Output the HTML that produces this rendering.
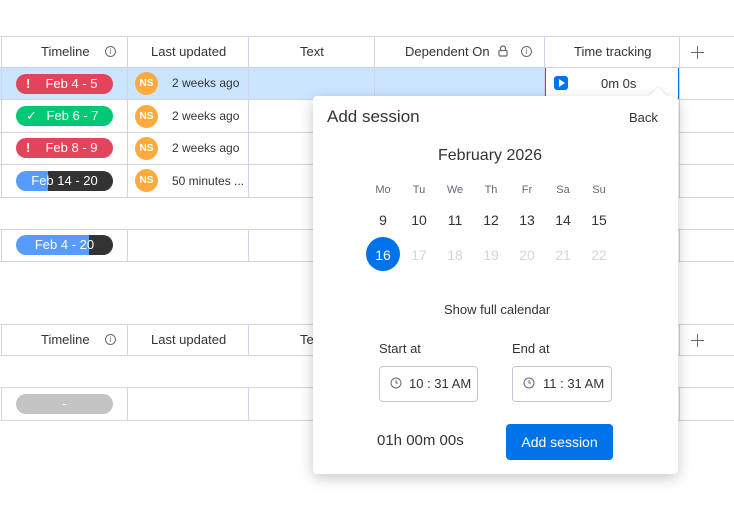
<!DOCTYPE html>
<html><head><style>
*{box-sizing:border-box;margin:0;padding:0}
body{width:734px;height:508px;background:#fff;font-family:"Liberation Sans",sans-serif;color:#323338;position:relative;overflow:hidden;font-size:13px}
.h{position:absolute;background:#d0d4e8;height:1px}
.v{position:absolute;background:#d0d4e8;width:1px}
.t{position:absolute;white-space:nowrap}
.pill{position:absolute;left:16px;width:97px;height:20px;border-radius:10px;color:#fff;font-size:13px;text-align:center;line-height:20px;overflow:hidden}
.av{position:absolute;left:135px;width:23px;height:23px;border-radius:50%;background:#fdab3d;color:#fff;font-size:10px;font-weight:bold;text-align:center;line-height:23px}
.info{position:absolute;width:11px;height:11px;border:1px solid #676879;border-radius:50%;font-size:8px;line-height:9px;text-align:center;color:#676879}
.day{position:absolute;width:36px;text-align:center;font-size:14px}
.plus{position:absolute;width:13px;height:13px}
.plus:before,.plus:after{content:"";position:absolute;background:#676879}
.plus:before{left:6px;top:0;width:1px;height:13px}
.plus:after{top:6px;left:0;height:1px;width:13px}
</style></head><body>
<div style="position:absolute;left:0;top:67px;width:679px;height:32px;background:#cce5ff"></div>
<div style="position:absolute;left:545px;top:67px;width:134px;height:32px;border:1px solid #0073ea;background:#fff"></div>
<div class="h" style="left:0;top:36px;width:734px"></div>
<div class="h" style="left:0;top:67px;width:734px"></div>
<div class="h" style="left:0;top:99px;width:734px"></div>
<div class="h" style="left:0;top:132px;width:734px"></div>
<div class="h" style="left:0;top:164px;width:734px"></div>
<div class="h" style="left:0;top:197px;width:734px"></div>
<div class="h" style="left:0;top:229px;width:734px"></div>
<div class="h" style="left:0;top:261px;width:734px"></div>
<div class="v" style="left:1px;top:36px;height:161px"></div>
<div class="v" style="left:127px;top:36px;height:161px"></div>
<div class="v" style="left:248px;top:36px;height:161px"></div>
<div class="v" style="left:374px;top:36px;height:161px"></div>
<div class="v" style="left:544px;top:36px;height:161px"></div>
<div class="v" style="left:679px;top:36px;height:161px"></div>
<div class="v" style="left:1px;top:229px;height:32px"></div>
<div class="v" style="left:127px;top:229px;height:32px"></div>
<div class="v" style="left:248px;top:229px;height:32px"></div>
<div class="v" style="left:679px;top:229px;height:32px"></div>
<div class="t" style="left:41px;top:44px">Timeline</div><div class="info" style="left:105px;top:46px">i</div>
<div class="t" style="left:151px;top:44px">Last updated</div>
<div class="t" style="left:300px;top:44px">Text</div>
<div class="t" style="left:405px;top:44px">Dependent On</div>
<svg style="position:absolute;left:498px;top:45px" width="10" height="12" viewBox="0 0 10 12"><path d="M2.5 5.5V3.5a2.5 2.5 0 0 1 5 0v2" fill="none" stroke="#676879" stroke-width="1.2"/><rect x="1" y="5.5" width="8" height="5.5" rx="1" fill="none" stroke="#676879" stroke-width="1.2"/></svg>
<div class="info" style="left:521px;top:46px">i</div>
<div class="t" style="left:574px;top:44px">Time tracking</div>
<div class="plus" style="left:691px;top:46px"></div>
<div class="pill" style="top:74px;background:#e2445c"><b style="position:absolute;left:10px">!</b><span style="margin-left:14px">Feb 4 - 5</span></div>
<div class="pill" style="top:106px;background:#00c875"><span style="position:absolute;left:10px">✓</span><span style="margin-left:16px">Feb 6 - 7</span></div>
<div class="pill" style="top:138px;background:#e2445c"><b style="position:absolute;left:10px">!</b><span style="margin-left:14px">Feb 8 - 9</span></div>
<div class="pill" style="top:171px;background:linear-gradient(90deg,#579bfc 32px,#333 32px)">Feb 14 - 20</div>
<div class="pill" style="top:235px;background:linear-gradient(90deg,#579bfc 73px,#333 73px)">Feb 4 - 20</div>
<div class="av" style="top:72px">NS</div><div class="t" style="left:172px;top:76px;font-size:12px">2 weeks ago</div>
<div class="av" style="top:105px">NS</div><div class="t" style="left:172px;top:109px;font-size:12px">2 weeks ago</div>
<div class="av" style="top:137px">NS</div><div class="t" style="left:172px;top:141px;font-size:12px">2 weeks ago</div>
<div class="av" style="top:169px">NS</div><div class="t" style="left:172px;top:174px;font-size:12px">50 minutes ...</div>
<div style="position:absolute;left:554px;top:76px;width:14px;height:14px;background:#0073ea;border-radius:3px"><div style="position:absolute;left:5px;top:3px;border-left:6px solid #fff;border-top:4px solid transparent;border-bottom:4px solid transparent"></div></div>
<div class="t" style="left:601px;top:76px">0m 0s</div>
<div class="h" style="left:0;top:324px;width:734px"></div>
<div class="h" style="left:0;top:355px;width:734px"></div>
<div class="h" style="left:0;top:387px;width:734px"></div>
<div class="h" style="left:0;top:420px;width:734px"></div>
<div class="v" style="left:1px;top:324px;height:31px"></div><div class="v" style="left:127px;top:324px;height:31px"></div><div class="v" style="left:248px;top:324px;height:31px"></div><div class="v" style="left:679px;top:324px;height:31px"></div>
<div class="v" style="left:1px;top:387px;height:33px"></div><div class="v" style="left:127px;top:387px;height:33px"></div><div class="v" style="left:248px;top:387px;height:33px"></div><div class="v" style="left:679px;top:387px;height:33px"></div>
<div class="t" style="left:41px;top:332px">Timeline</div><div class="info" style="left:105px;top:334px">i</div>
<div class="t" style="left:151px;top:332px">Last updated</div>
<div class="t" style="left:300px;top:332px">Te</div>
<div class="plus" style="left:691px;top:334px"></div>
<div class="pill" style="top:394px;background:#c4c4c4">-</div>
<div style="position:absolute;left:313px;top:96px;width:365px;height:378px;background:#fff;border-radius:4px;box-shadow:0 4px 14px rgba(0,0,0,.22)"></div>
<div style="position:absolute;left:652px;top:90px;width:12px;height:12px;background:#fff;transform:rotate(45deg);box-shadow:-1px -1px 2px rgba(0,0,0,.08)"></div>
<div style="position:absolute;left:646px;top:96px;width:24px;height:8px;background:#fff"></div>
<div class="t" style="left:327px;top:107px;font-size:17px">Add session</div>
<div class="t" style="left:629px;top:110px">Back</div>
<div class="t" style="left:438px;top:147px;font-size:16px">February 2026</div>
<div class="day" style="left:365px;top:184px;font-size:11px;color:#676879">Mo</div>
<div class="day" style="left:401px;top:184px;font-size:11px;color:#676879">Tu</div>
<div class="day" style="left:437px;top:184px;font-size:11px;color:#676879">We</div>
<div class="day" style="left:473px;top:184px;font-size:11px;color:#676879">Th</div>
<div class="day" style="left:509px;top:184px;font-size:11px;color:#676879">Fr</div>
<div class="day" style="left:545px;top:184px;font-size:11px;color:#676879">Sa</div>
<div class="day" style="left:581px;top:184px;font-size:11px;color:#676879">Su</div>
<div class="day" style="left:365px;top:212px">9</div><div class="day" style="left:401px;top:212px">10</div><div class="day" style="left:437px;top:212px">11</div><div class="day" style="left:473px;top:212px">12</div><div class="day" style="left:509px;top:212px">13</div><div class="day" style="left:545px;top:212px">14</div><div class="day" style="left:581px;top:212px">15</div>
<div style="position:absolute;left:366px;top:237px;width:34px;height:34px;border-radius:50%;background:#0073ea"></div>
<div class="day" style="left:365px;top:247px;color:#fff">16</div>
<div class="day" style="left:401px;top:247px;color:#d5d5da">17</div><div class="day" style="left:437px;top:247px;color:#d5d5da">18</div><div class="day" style="left:473px;top:247px;color:#d5d5da">19</div><div class="day" style="left:509px;top:247px;color:#d5d5da">20</div><div class="day" style="left:545px;top:247px;color:#d5d5da">21</div><div class="day" style="left:581px;top:247px;color:#d5d5da">22</div>
<div class="t" style="left:444px;top:302px">Show full calendar</div>
<div class="t" style="left:379px;top:341px">Start at</div>
<div class="t" style="left:512px;top:341px">End at</div>
<div style="position:absolute;left:379px;top:366px;width:99px;height:36px;border:1px solid #c3c6d4;border-radius:4px"></div>
<div style="position:absolute;left:512px;top:366px;width:100px;height:36px;border:1px solid #c3c6d4;border-radius:4px"></div>
<svg style="position:absolute;left:390px;top:377px" width="12" height="12" viewBox="0 0 12 12"><circle cx="6" cy="6" r="5" fill="none" stroke="#676879"/><path d="M6 3v3h2" fill="none" stroke="#676879"/></svg>
<svg style="position:absolute;left:523px;top:377px" width="12" height="12" viewBox="0 0 12 12"><circle cx="6" cy="6" r="5" fill="none" stroke="#676879"/><path d="M6 3v3h2" fill="none" stroke="#676879"/></svg>
<div class="t" style="left:409px;top:376px">10 : 31 AM</div>
<div class="t" style="left:543px;top:376px">11 : 31 AM</div>
<div class="t" style="left:377px;top:432px;font-size:15px">01h 00m 00s</div>
<div style="position:absolute;left:506px;top:424px;width:107px;height:36px;background:#0073ea;border-radius:4px;color:#fff;font-size:14px;text-align:center;line-height:36px">Add session</div>
</body></html>
